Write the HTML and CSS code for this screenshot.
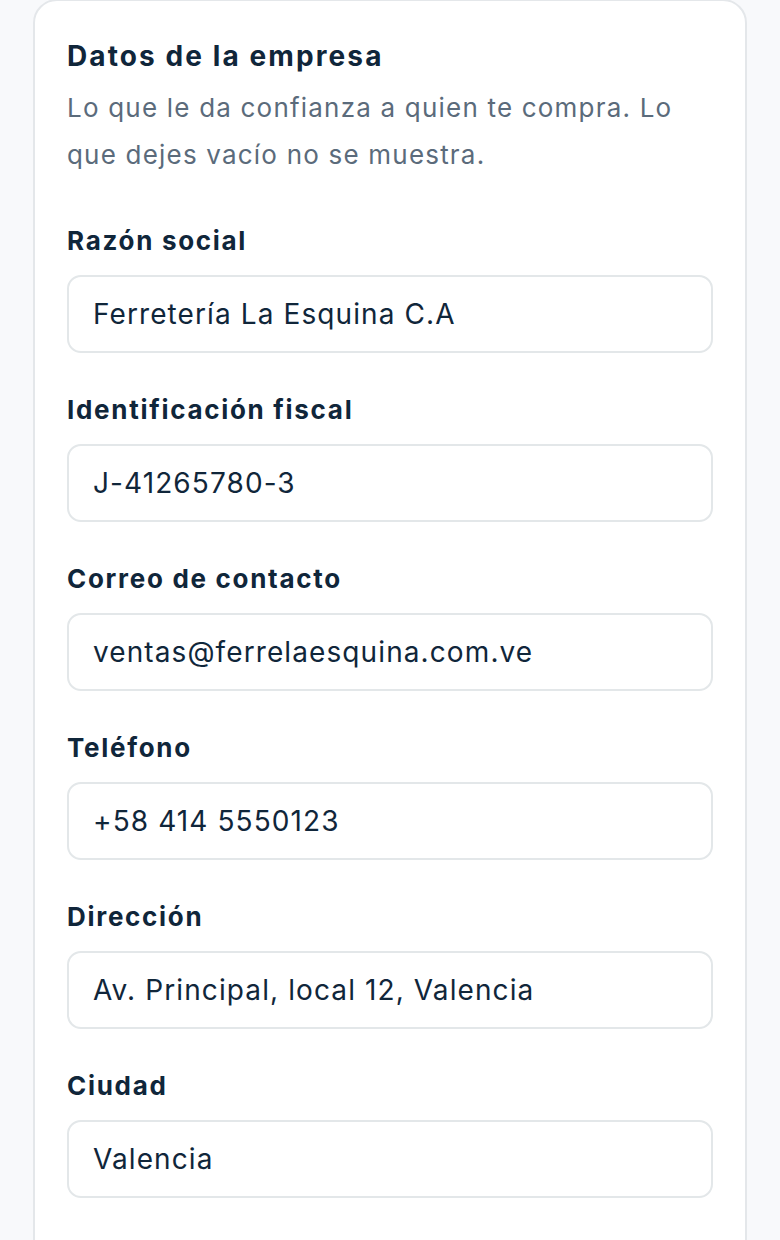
FILE: index.html
```html
<!DOCTYPE html>
<html lang="es">
<head>
<meta charset="utf-8">
<title>Datos de la empresa</title>
<link rel="stylesheet" href="styles.css">
</head>
<body>
<section class="card">
  <h2 class="card-title">Datos de la empresa</h2>
  <p class="card-desc">Lo que le da confianza a quien te compra. Lo que dejes vacío no se muestra.</p>
  <div class="fields">
    <div class="field">
      <label class="field-label">Razón social</label>
      <div class="field-input">Ferretería La Esquina C.A</div>
    </div>
    <div class="field">
      <label class="field-label">Identificación fiscal</label>
      <div class="field-input">J-41265780-3</div>
    </div>
    <div class="field">
      <label class="field-label">Correo de contacto</label>
      <div class="field-input">ventas@ferrelaesquina.com.ve</div>
    </div>
    <div class="field">
      <label class="field-label">Teléfono</label>
      <div class="field-input">+58 414 5550123</div>
    </div>
    <div class="field">
      <label class="field-label">Dirección</label>
      <div class="field-input">Av. Principal, local 12, Valencia</div>
    </div>
    <div class="field">
      <label class="field-label">Ciudad</label>
      <div class="field-input">Valencia</div>
    </div>
  </div>
</section>
</body>
</html>
```

FILE: styles.css
```css
html, body {
  margin: 0;
  padding: 0;
  background: #f8f9fb;
}
body {
  font-family: Inter, "Noto Sans", sans-serif;
  color: #10263a;
  height: 1240px;
  overflow: hidden;
}
.card {
  margin: -1px 0 0 33px;
  width: 714px;
  box-sizing: border-box;
  min-height: 1400px;
  background: #ffffff;
  border: 2px solid #e4e7ea;
  border-radius: 24px;
  padding: 37px 32px 40px;
}
.card-title {
  margin: 0;
  font-size: 28px;
  line-height: 36px;
  font-weight: 700;
  color: #10263a;
  letter-spacing: 2.1px;
}
.card-desc {
  margin: 10px 0 0;
  font-size: 26px;
  line-height: 47px;
  color: #5b6b7b;
  font-weight: 400;
  letter-spacing: 1.2px;
}
.fields {
  margin-top: 45px;
  display: flex;
  flex-direction: column;
  gap: 39px;
}
.field {
  display: flex;
  flex-direction: column;
  gap: 16px;
}
.field-label {
  font-size: 26px;
  line-height: 36px;
  font-weight: 700;
  color: #10263a;
  letter-spacing: 1.7px;
}
.field-input {
  box-sizing: border-box;
  height: 78px;
  border: 2px solid #e3e7e9;
  border-radius: 14px;
  padding: 0 24px;
  display: flex;
  align-items: center;
  font-size: 28px;
  color: #10263a;
  background: #fff;
  letter-spacing: 1.1px;
}
```
